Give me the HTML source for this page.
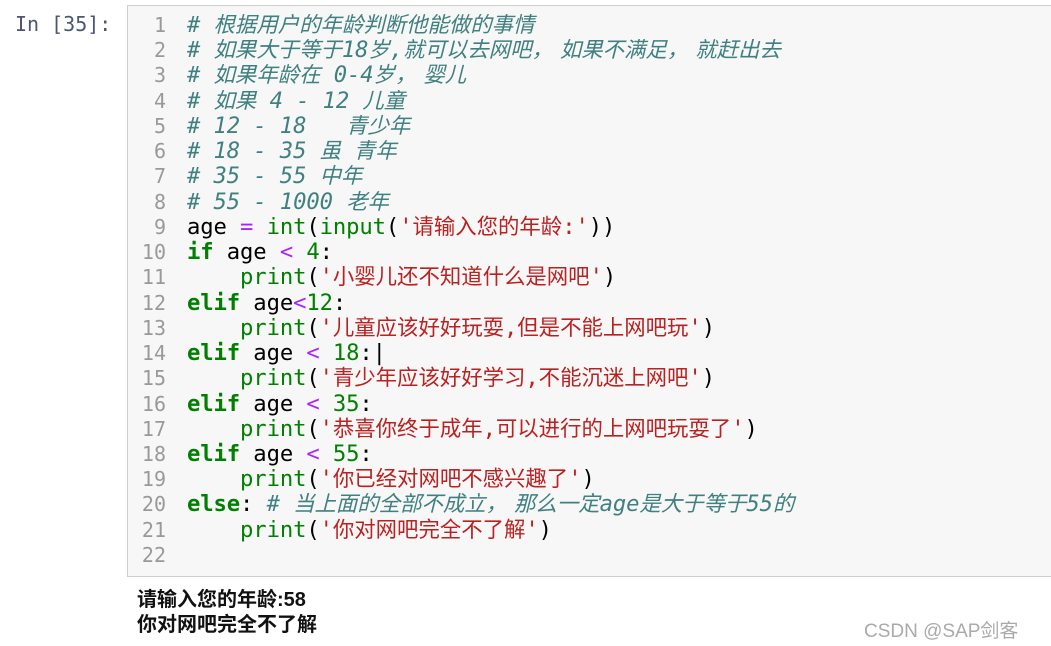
<!DOCTYPE html>
<html><head><meta charset="utf-8"><style>
body{margin:0;width:1051px;height:646px;background:#fff;overflow:hidden;position:relative;font-family:"DejaVu Sans Mono","Noto Sans CJK SC",monospace;}
.prompt{position:absolute;left:15px;top:12px;font-size:20px;color:#4d5572;}
.cell{position:absolute;left:127px;top:5px;width:930px;height:572px;background:#f7f7f7;border:1px solid #cfcfcf;box-sizing:border-box;}
.gut{position:absolute;left:128px;top:13px;width:38px;text-align:right;color:#999;font-size:20px;line-height:25.24px;}
.code{position:absolute;left:187px;top:13px;font-size:22.2px;line-height:25.24px;color:#000;white-space:pre;letter-spacing:-0.1px;}
.z{font-size:21.4px;letter-spacing:0;}
.sp{display:inline-block;width:7px;}
.c{color:#408080;font-style:italic}.k{color:#008000;font-weight:bold}.s{color:#ba2121}.o{color:#aa22ff}.n{color:#008000}.b{color:#008000}
.out{position:absolute;left:137px;top:588px;font-family:"Liberation Sans","Noto Sans CJK SC",sans-serif;font-size:20px;line-height:25px;font-weight:bold;color:#111;}
.wm{position:absolute;left:864px;top:616px;font-family:"Liberation Sans","Noto Sans CJK SC",sans-serif;font-size:19px;color:#aaa;}
</style></head><body>
<div class="prompt">In [35]:</div>
<div class="cell"></div>
<div class="gut">1<br>2<br>3<br>4<br>5<br>6<br>7<br>8<br>9<br>10<br>11<br>12<br>13<br>14<br>15<br>16<br>17<br>18<br>19<br>20<br>21<br>22</div>
<div class="code"><span class="c"># <span class="z">根据用户的年龄判断他能做的事情</span></span>
<span class="c"># <span class="z">如果大于等于</span>18<span class="z">岁</span>,<span class="z">就可以去网吧，<span class="sp"></span>如果不满足，<span class="sp"></span>就赶出去</span></span>
<span class="c"># <span class="z">如果年龄在</span> 0-4<span class="z">岁，<span class="sp"></span>婴儿</span></span>
<span class="c"># <span class="z">如果</span> 4 - 12 <span class="z">儿童</span></span>
<span class="c"># 12 - 18   <span class="z">青少年</span></span>
<span class="c"># 18 - 35 <span class="z">虽 青年</span></span>
<span class="c"># 35 - 55 <span class="z">中年</span></span>
<span class="c"># 55 - 1000 <span class="z">老年</span></span>
age <span class="o">=</span> <span class="b">int</span>(<span class="b">input</span>(<span class="s">'<span class="z">请输入您的年龄</span>:'</span>))
<span class="k">if</span> age <span class="o">&lt;</span> <span class="n">4</span>:
    <span class="b">print</span>(<span class="s">'<span class="z">小婴儿还不知道什么是网吧</span>'</span>)
<span class="k">elif</span> age<span class="o">&lt;</span><span class="n">12</span>:
    <span class="b">print</span>(<span class="s">'<span class="z">儿童应该好好玩耍</span>,<span class="z">但是不能上网吧玩</span>'</span>)
<span class="k">elif</span> age <span class="o">&lt;</span> <span class="n">18</span>:|
    <span class="b">print</span>(<span class="s">'<span class="z">青少年应该好好学习</span>,<span class="z">不能沉迷上网吧</span>'</span>)
<span class="k">elif</span> age <span class="o">&lt;</span> <span class="n">35</span>:
    <span class="b">print</span>(<span class="s">'<span class="z">恭喜你终于成年</span>,<span class="z">可以进行的上网吧玩耍了</span>'</span>)
<span class="k">elif</span> age <span class="o">&lt;</span> <span class="n">55</span>:
    <span class="b">print</span>(<span class="s">'<span class="z">你已经对网吧不感兴趣了</span>'</span>)
<span class="k">else</span>: <span class="c"># <span class="z">当上面的全部不成立，<span class="sp"></span>那么一定</span>age<span class="z">是大于等于</span>55<span class="z">的</span></span>
    <span class="b">print</span>(<span class="s">'<span class="z">你对网吧完全不了解</span>'</span>)
</div>
<div class="out">请输入您的年龄:58<br>你对网吧完全不了解</div>
<div class="wm">CSDN @SAP剑客</div>
</body></html>
